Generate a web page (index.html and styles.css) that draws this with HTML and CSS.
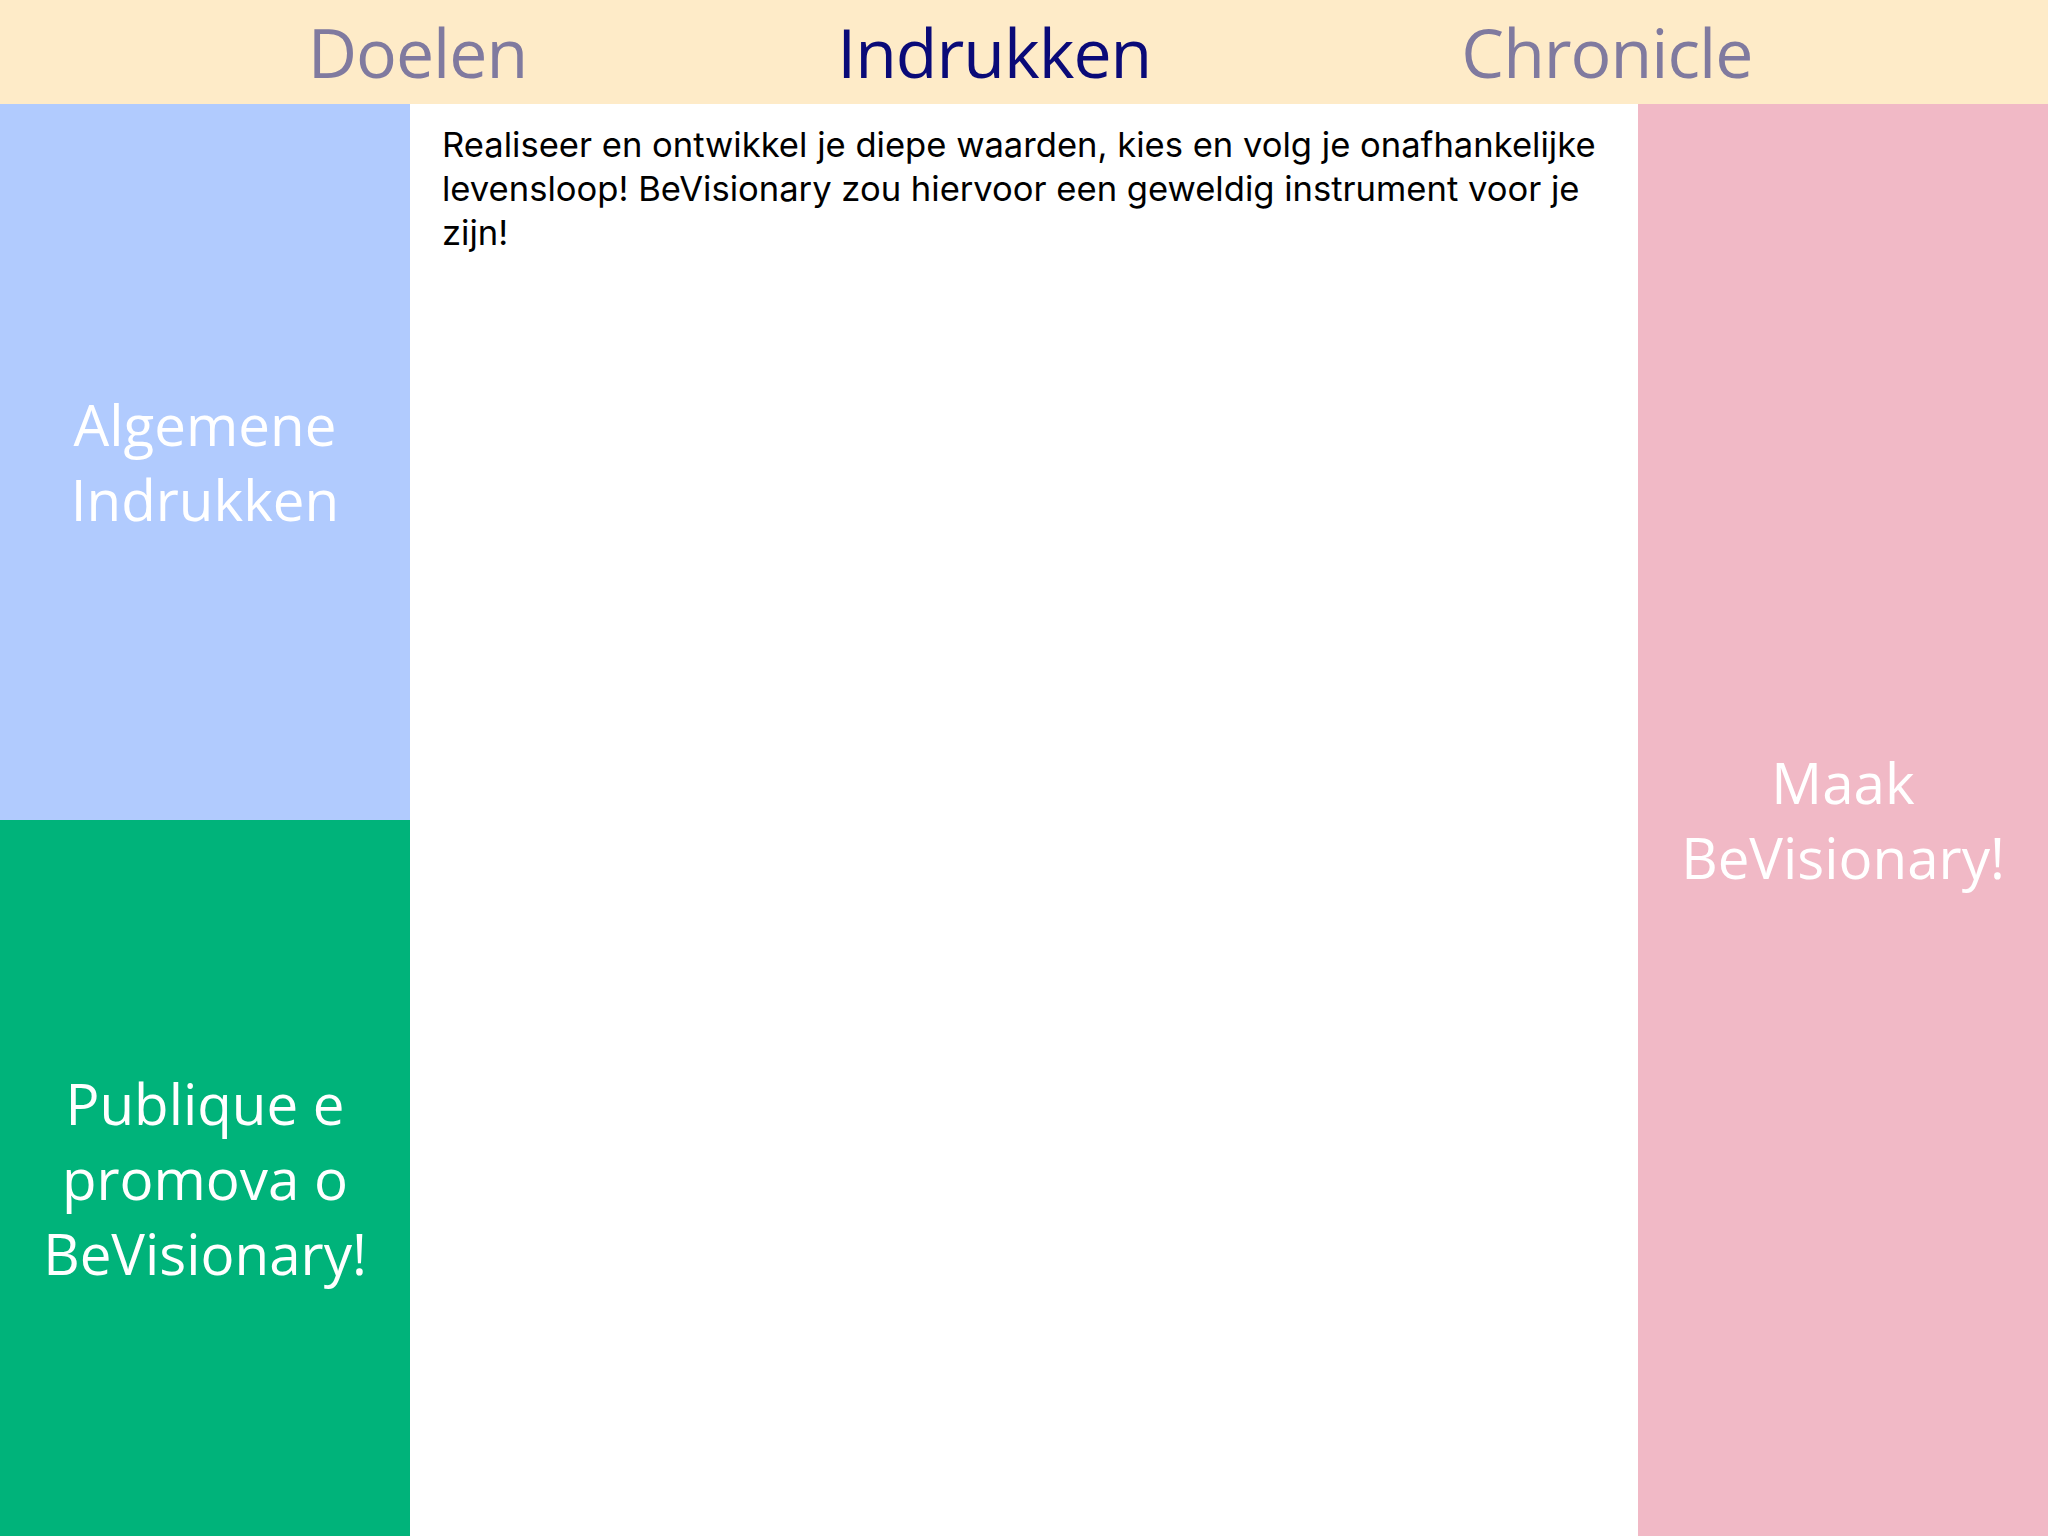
FILE: index.html
```html
<!DOCTYPE html>
<html lang="nl">
<head>
<meta charset="utf-8">
<title>BeVisionary – Indrukken</title>
<link rel="stylesheet" href="styles.css">
</head>
<body>
<div class="app">
  <header class="tabs">
    <div class="tab">Doelen</div>
    <div class="tab active">Indrukken</div>
    <div class="tab">Chronicle</div>
  </header>
  <div class="body">
    <aside class="left">
      <div class="tile blue">Algemene<br>Indrukken</div>
      <div class="tile green">Publique e<br>promova o<br>BeVisionary!</div>
    </aside>
    <main class="main">
      <p class="intro">Realiseer en ontwikkel je diepe waarden, kies en volg je onafhankelijke levensloop! BeVisionary zou hiervoor een geweldig instrument voor je zijn!</p>
    </main>
    <aside class="right">
      <div class="tile pink">Maak<br>BeVisionary!</div>
    </aside>
  </div>
</div>
</body>
</html>
```
FILE: styles.css
```css
html, body {
  margin: 0;
  padding: 0;
}
body {
  width: 2048px;
  height: 1536px;
  overflow: hidden;
  background: #ffffff;
}
.app {
  display: flex;
  flex-direction: column;
  height: 1536px;
}
.tabs {
  height: 104px;
  background: #feebc8;
  display: flex;
  justify-content: center;
  gap: 310px;
  padding-left: 12px;
  align-items: center;
  font-family: "Open Sans", "Noto Sans", sans-serif;
}
.tab {
  text-align: center;
  font-size: 68px;
  line-height: 104px;
  color: #807a9f;
  letter-spacing: -1px;
}
.tab.active {
  color: #0a0a78;
}
.body {
  flex: 1;
  display: grid;
  grid-template-columns: 410px 1fr 410px;
  min-height: 0;
}
.left {
  display: grid;
  grid-template-rows: 1fr 1fr;
}
.tile {
  display: flex;
  align-items: center;
  justify-content: center;
  text-align: center;
  color: #ffffff;
  font-family: "Open Sans", "Noto Sans", sans-serif;
  font-size: 56.5px;
  line-height: 75px;
}
.blue { background: #b1cbfe; }
.green { background: #00b37a; }
.pink { background: #f1b9c6; height: 100%; }
.right { display: flex; }
.right .tile { flex: 1; }
.main {
  padding: 0 32px;
}
.intro {
  margin: 0;
  padding-top: 18px;
  font-family: Inter, "Liberation Sans", sans-serif;
  font-size: 34.6px;
  line-height: 44px;
  color: #000000;
}
```
